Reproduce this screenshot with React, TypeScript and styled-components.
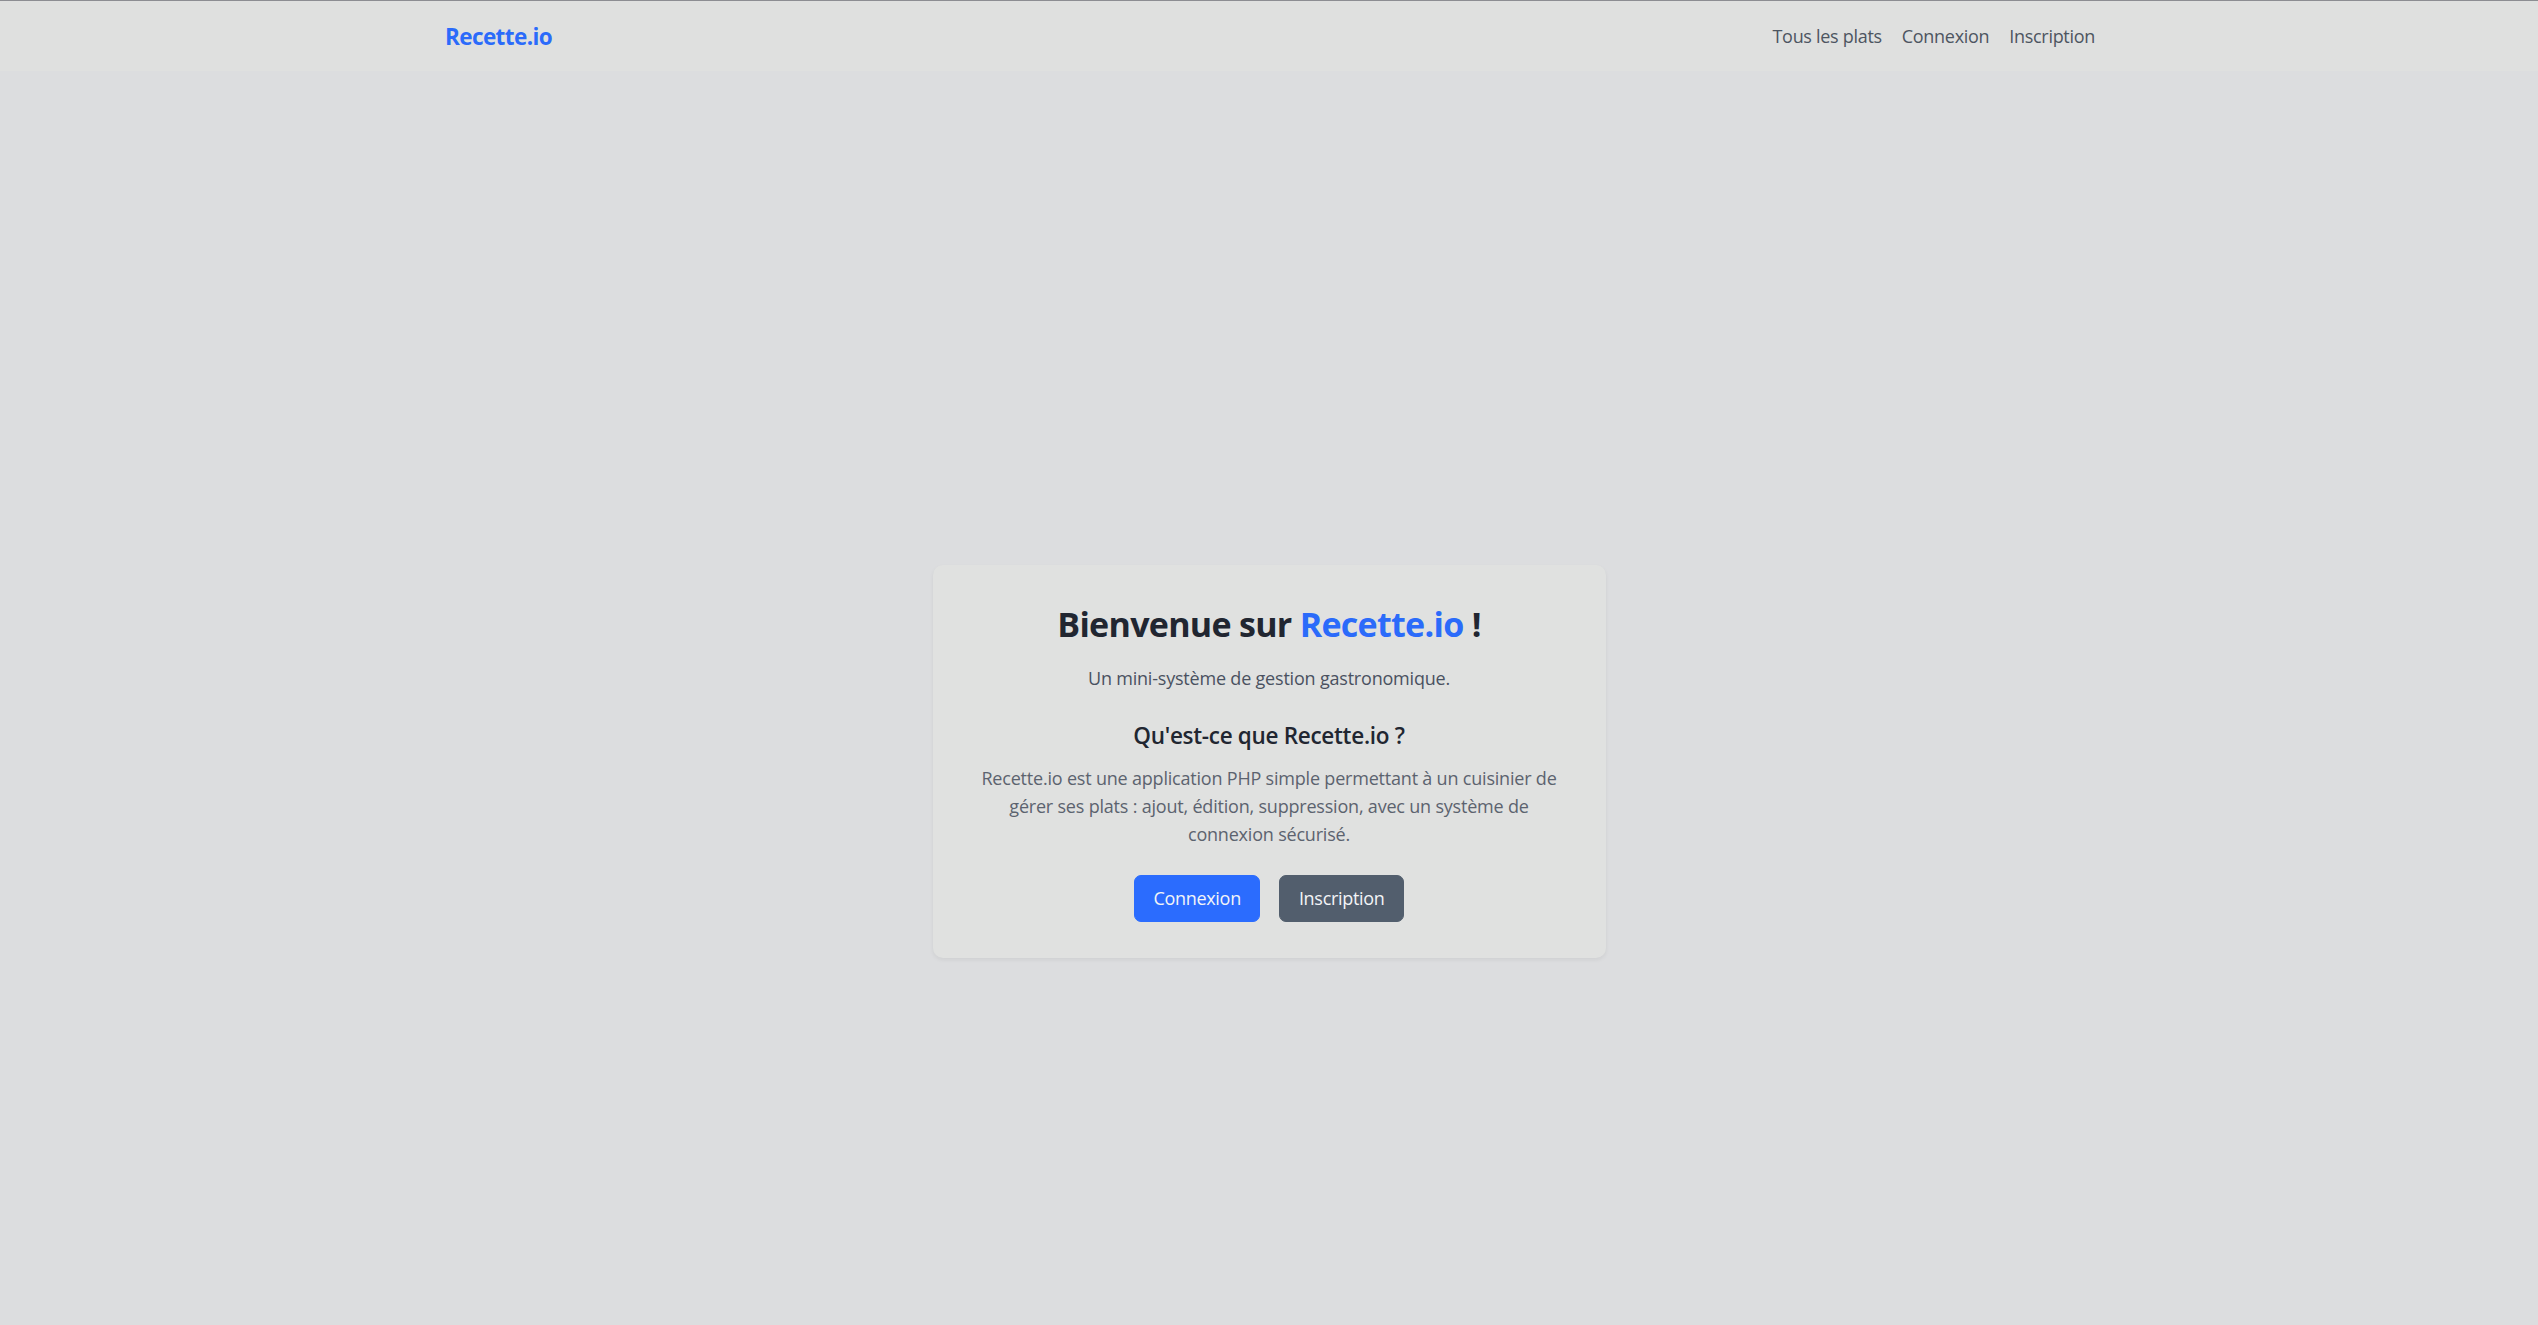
import React from "react";
import styled, { createGlobalStyle } from "styled-components";

const GlobalStyle = createGlobalStyle`
  html, body {
    margin: 0;
    padding: 0;
    background: #dcdddf;
    font-family: "Open Sans", "Noto Sans", "Liberation Sans", sans-serif;
    color: #212631;
  }
  * { box-sizing: border-box; }
`;

const Page = styled.div`
  min-height: 1325px;
  border-top: 1px solid #8c8d92;
  display: flex;
  flex-direction: column;
`;

const NavBar = styled.nav`
  height: 70px;
  background: #dfe0df;
  display: flex;
  align-items: center;
  justify-content: space-between;
  padding: 0 433px 0 445px;
`;

const Brand = styled.a`
  font-size: 22.5px;
  font-weight: 700;
  letter-spacing: -0.6px;
  color: #2b6bfa;
  text-decoration: none;
  line-height: 1.2;
`;

const NavLinks = styled.ul`
  list-style: none;
  margin: 0;
  padding: 0;
  display: flex;
  align-items: center;
`;

const NavLink = styled.a`
  display: block;
  padding: 0 10px;
  font-size: 18px;
  line-height: 27px;
  letter-spacing: -0.3px;
  color: #4d5561;
  text-decoration: none;
`;

const Main = styled.main`
  display: flex;
  justify-content: center;
  padding-top: 494px;
`;

const Card = styled.section`
  width: 673px;
  background: #e0e1e0;
  border-radius: 10px;
  box-shadow: 0 2px 4px rgba(0, 0, 0, 0.06);
  padding: 39px 36px 36px;
  display: flex;
  flex-direction: column;
  align-items: center;
  text-align: center;
`;

const Title = styled.h2`
  margin: 0 0 20px;
  font-size: 34px;
  line-height: 1.2;
  font-weight: 700;
  letter-spacing: -0.7px;
  color: #212631;
`;

const Accent = styled.span`
  color: #2b6bfa;
`;

const Subtitle = styled.p`
  margin: 0 0 30px;
  font-size: 18px;
  line-height: 27px;
  letter-spacing: -0.2px;
  color: #4a5160;
`;

const SectionTitle = styled.h5`
  margin: 0 0 15px;
  font-size: 22.5px;
  line-height: 27px;
  font-weight: 600;
  letter-spacing: -0.3px;
  color: #212631;
`;

const Description = styled.p`
  margin: 0 0 27px;
  font-size: 18px;
  line-height: 28px;
  letter-spacing: -0.2px;
  color: #5c636f;
`;

const Actions = styled.div`
  display: flex;
  gap: 19px;
  justify-content: center;
`;

const Button = styled.a<{ $variant: "primary" | "secondary" }>`
  display: inline-block;
  padding: 9px 18.5px;
  border: 1px solid
    ${(p) => (p.$variant === "primary" ? "#2b6cfe" : "#525e6d")};
  background: ${(p) => (p.$variant === "primary" ? "#2b6cfe" : "#525e6d")};
  color: #f2f4f7;
  border-radius: 7px;
  font-size: 18px;
  line-height: 27px;
  letter-spacing: -0.3px;
  text-decoration: none;
`;

export default function App() {
  return (
    <>
      <GlobalStyle />
      <Page>
        <NavBar>
          <Brand href="#">Recette.io</Brand>
          <NavLinks>
            <li>
              <NavLink href="#">Tous les plats</NavLink>
            </li>
            <li>
              <NavLink href="#">Connexion</NavLink>
            </li>
            <li>
              <NavLink href="#">Inscription</NavLink>
            </li>
          </NavLinks>
        </NavBar>
        <Main>
          <Card>
            <Title>
              Bienvenue sur <Accent>Recette.io</Accent> !
            </Title>
            <Subtitle>Un mini-système de gestion gastronomique.</Subtitle>
            <SectionTitle>Qu'est-ce que Recette.io ?</SectionTitle>
            <Description>
              Recette.io est une application PHP simple permettant à un cuisinier de
              <br />
              gérer ses plats : ajout, édition, suppression, avec un système de
              <br />
              connexion sécurisé.
            </Description>
            <Actions>
              <Button href="#" $variant="primary">
                Connexion
              </Button>
              <Button href="#" $variant="secondary">
                Inscription
              </Button>
            </Actions>
          </Card>
        </Main>
      </Page>
    </>
  );
}
